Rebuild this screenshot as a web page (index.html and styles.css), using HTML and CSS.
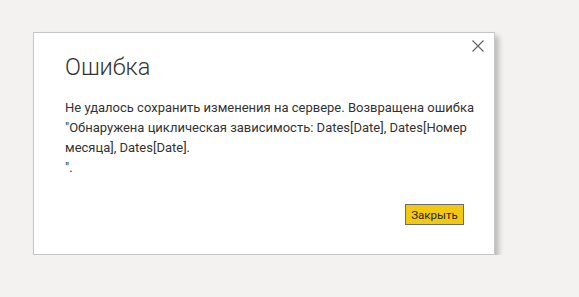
FILE: index.html
```html
<!DOCTYPE html>
<html lang="ru">
<head>
    <meta charset="UTF-8">
    <title>Ошибка</title>
    <link rel="stylesheet" href="styles.css">
</head>
<body>
    <div class="dialog">
        <button class="close" aria-label="Закрыть">
            <svg width="12" height="12" viewBox="0 0 12 12"><path d="M0.5 0.5 L11.5 11.5 M11.5 0.5 L0.5 11.5" stroke="#666" stroke-width="1.2" fill="none"/></svg>
        </button>
        <h1>Ошибка</h1>
        <p class="message">Не удалось сохранить изменения на сервере. Возвращена ошибка "Обнаружена циклическая зависимость: Dates[Date], Dates[Номер месяца], Dates[Date].<br>".</p>
        <div class="actions">
            <button class="btn">Закрыть</button>
        </div>
    </div>
</body>
</html>
```

FILE: styles.css
```css
body {
    margin: 0;
    background: #f3f2f1;
    font-family: Roboto, "Open Sans", sans-serif;
    padding: 32px 0 0 33px;
}
.dialog {
    position: relative;
    width: 462px;
    height: 223px;
    background: #fff;
    border: 1px solid #c6c6c6;
    box-shadow: 4px 4px 5px rgba(0, 0, 0, 0.22);
    padding: 0 30px 0 31px;
    box-sizing: border-box;
    display: flex;
    flex-direction: column;
}
.close {
    position: absolute;
    top: 7px;
    right: 10px;
    border: 0;
    background: none;
    padding: 0;
    width: 12px;
    height: 12px;
}
h1 {
    margin: 18px 0 0;
    font-size: 23.5px;
    font-weight: 300;
    color: #333;
    line-height: 33px;
}
.message {
    margin: 14px 0 0;
    font-size: 13px;
    line-height: 20px;
    color: #333;
    width: 415px;
}
.actions {
    display: flex;
    justify-content: flex-end;
    margin-top: auto;
    margin-bottom: 29px;
}
.btn {
    background: #f2c811;
    border: 1px solid #6b6b6b;
    height: 21px;
    width: 59px;
    padding: 0;
    font-family: Roboto, sans-serif;
    font-size: 11.5px;
    color: #252423;
}
```
